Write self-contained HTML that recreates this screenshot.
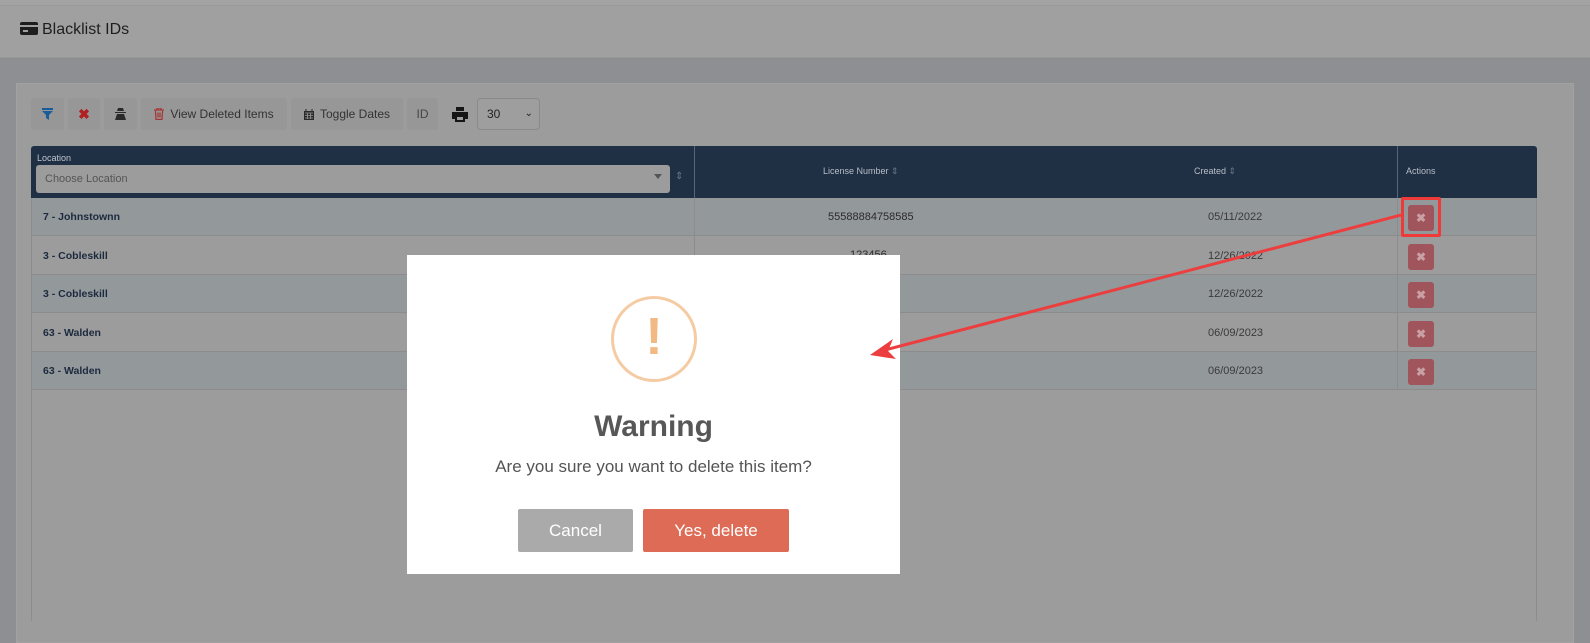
<!DOCTYPE html>
<html><head><meta charset="utf-8"><style>
*{box-sizing:border-box;margin:0;padding:0}
body{width:1590px;height:621px;overflow:hidden;background:#8e8f93;font-family:"Liberation Sans",Arial,sans-serif;position:relative}
.a{position:absolute}
.top{left:0;top:0;width:1590px;height:6px;background:#a3a3a3;border-bottom:1px solid #9a9a9a}
.hdr{left:0;top:6px;width:1590px;height:52px;background:#a0a0a0;border-bottom:1px solid #969696}
.title{left:20px;top:21px;font-size:16px;color:#1e1e1e}
.card{left:16px;top:83px;width:1558px;height:560px;background:#9c9c9c;border:1px solid #a2a2a2}
.btn{top:98px;height:32px;background:#979797;border-radius:3px;font-size:12px;color:#333;display:flex;align-items:center;justify-content:center;gap:6px}
.sel{left:477px;top:98px;width:63px;height:32px;border:1px solid #8a8a8a;border-radius:4px;background:#9e9e9e;font-size:12px;color:#222;padding-left:9px;line-height:30px}
.th{top:146px;height:52px;background:#1f2f44}
.tht{font-size:9px;color:#b8bec8}
.row{left:31px;width:1506px;height:38px;border-bottom:1px solid #8c8c8c}
.cell{font-size:11px;color:#2a2a2a}
.loc{left:43px;font-size:10.5px;font-weight:bold;color:#1c2a3e}
.xb{left:1408px;width:26px;height:26px;border-radius:3px;background:#a0545c;color:#c9a0a4;font-size:12px;text-align:center;line-height:26px;font-weight:bold}
.vl{width:1px;background:#8c8c8c}
</style></head><body>
<div class="a top"></div>
<div class="a hdr"></div>
<div class="a title"><span style="display:inline-block;width:18px;height:13px;background:#1e1e1e;border-radius:2px;vertical-align:-1px;margin-right:4px;position:relative"><span style="position:absolute;left:0;top:3px;width:18px;height:2px;background:#a0a0a0"></span><span style="position:absolute;left:3px;top:8px;width:5px;height:2px;background:#a0a0a0"></span></span>Blacklist IDs</div>
<div class="a card"></div>
<div class="a btn" style="left:31px;width:33px"><svg width="11" height="12" viewBox="0 0 11 12"><path d="M0 0h11v2H0zM0 3h11L7 7v5l-3-2V7z" fill="#1a5c9a"/></svg></div>
<div class="a btn" style="left:68px;width:32px;color:#b02020;font-size:14px;font-weight:bold">✖</div>
<div class="a btn" style="left:104px;width:33px"><svg width="11" height="12" viewBox="0 0 11 12"><path d="M3 0h5l1 3H2zM0 4h11v1H0zM2 6h7l2 6H0z" fill="#2a2a2a"/></svg></div>
<div class="a btn" style="left:141px;width:146px"><svg width="10" height="12" viewBox="0 0 10 12"><path d="M0 2h10M3 2V0h4v2M1.5 3l.5 8.5h6l.5-8.5M4 4.5v5M6 4.5v5" stroke="#a83030" fill="none" stroke-width="1.2"/></svg><span>View Deleted Items</span></div>
<div class="a btn" style="left:291px;width:112px"><svg width="10" height="11" viewBox="0 0 10 11"><path d="M0 2h10v9H0z" fill="#2a2a2a"/><path d="M2 0v3M8 0v3" stroke="#2a2a2a"/><path d="M1 4h8M1 6.5h8M1 9h8M3.5 4v6M6.5 4v6" stroke="#979797" stroke-width=".8"/></svg><span>Toggle Dates</span></div>
<div class="a btn" style="left:407px;width:31px;color:#444">ID</div>
<svg class="a" style="left:452px;top:107px" width="16" height="15" viewBox="0 0 16 15"><path d="M4 0h8v4H4zM0 5h16v7h-3v3H3v-3H0z" fill="#151515"/><path d="M5 10h6v3H5z" fill="#9c9c9c"/></svg>
<div class="a sel">30<span style="position:absolute;right:6px;top:0;font-size:10px">⌄</span></div>

<div class="a th" style="left:31px;width:1506px;border-radius:3px 3px 0 0"></div>
<div class="a vl" style="left:694px;top:146px;height:52px;background:#56657a"></div>
<div class="a vl" style="left:1397px;top:146px;height:52px;background:#56657a"></div>
<div class="a tht" style="left:37px;top:153px;color:#c0c6d0">Location</div>
<div class="a" style="left:36px;top:165px;width:634px;height:28px;background:#9c9c9c;border-radius:3px;font-size:11px;color:#555;padding:8px 9px">Choose Location<span style="position:absolute;right:8px;top:9px;width:0;height:0;border:4px solid transparent;border-top:5px solid #555"></span></div>
<div class="a tht" style="left:675px;top:171px;font-size:10px;color:#6a7788">⇕</div>
<div class="a tht" style="left:823px;top:166px">License Number <span style="color:#6a7788">⇕</span></div>
<div class="a tht" style="left:1194px;top:166px">Created <span style="color:#6a7788">⇕</span></div>
<div class="a tht" style="left:1406px;top:166px">Actions</div>

<div class="a row" style="top:198px;background:#93989b"></div>
<div class="a row" style="top:237px;background:#9c9c9c"></div>
<div class="a row" style="top:275px;background:#93989b"></div>
<div class="a row" style="top:314px;background:#9c9c9c"></div>
<div class="a row" style="top:352px;background:#93989b"></div>
<div class="a vl" style="left:31px;top:198px;height:423px"></div>
<div class="a vl" style="left:1536px;top:198px;height:423px"></div>
<div class="a vl" style="left:694px;top:198px;height:192px"></div>
<div class="a vl" style="left:1397px;top:198px;height:192px"></div>

<div class="a loc" style="top:211px">7 - Johnstownn</div>
<div class="a loc" style="top:250px">3 - Cobleskill</div>
<div class="a loc" style="top:288px">3 - Cobleskill</div>
<div class="a loc" style="top:327px">63 - Walden</div>
<div class="a loc" style="top:365px">63 - Walden</div>
<div class="a cell" style="left:828px;top:211px">55588884758585</div>
<div class="a cell" style="left:850px;top:249px">123456</div>
<div class="a cell" style="left:1208px;top:211px;color:#3a3a3a">05/11/2022</div>
<div class="a cell" style="left:1208px;top:250px;color:#3a3a3a">12/26/2022</div>
<div class="a cell" style="left:1208px;top:288px;color:#3a3a3a">12/26/2022</div>
<div class="a cell" style="left:1208px;top:327px;color:#3a3a3a">06/09/2023</div>
<div class="a cell" style="left:1208px;top:365px;color:#3a3a3a">06/09/2023</div>
<div class="a xb" style="top:205px">✖</div>
<div class="a xb" style="top:244px">✖</div>
<div class="a xb" style="top:282px">✖</div>
<div class="a xb" style="top:321px">✖</div>
<div class="a xb" style="top:359px">✖</div>
<div class="a" style="left:1401px;top:197px;width:40px;height:40px;border:3px solid #f03a3a;border-radius:2px"></div>

<div class="a" style="left:407px;top:255px;width:493px;height:319px;background:#fff"></div>
<div class="a" style="left:611px;top:296px;width:86px;height:86px;border:3px solid #f5cba3;border-radius:50%"></div>
<div class="a" style="left:611px;top:309px;width:86px;text-align:center;font-size:52px;font-weight:bold;color:#f3b985;line-height:56px">!</div>
<div class="a" style="left:407px;top:410px;width:493px;text-align:center;font-size:30px;font-weight:bold;color:#575757">Warning</div>
<div class="a" style="left:407px;top:457px;width:493px;text-align:center;font-size:17px;color:#545454">Are you sure you want to delete this item?</div>
<div class="a" style="left:518px;top:509px;width:115px;height:43px;background:#aaaaaa;border-radius:2px;color:#fff;font-size:17px;text-align:center;line-height:43px">Cancel</div>
<div class="a" style="left:643px;top:509px;width:146px;height:43px;background:#dd6b55;border-radius:2px;color:#fff;font-size:17px;text-align:center;line-height:43px">Yes, delete</div>

<svg class="a" style="left:0;top:0" width="1590" height="621"><line x1="1401" y1="215" x2="885" y2="350" stroke="#ec3e3e" stroke-width="3"/><path d="M870 355L893 339L888 351L896 359Z" fill="#ec3e3e"/></svg>
</body></html>
